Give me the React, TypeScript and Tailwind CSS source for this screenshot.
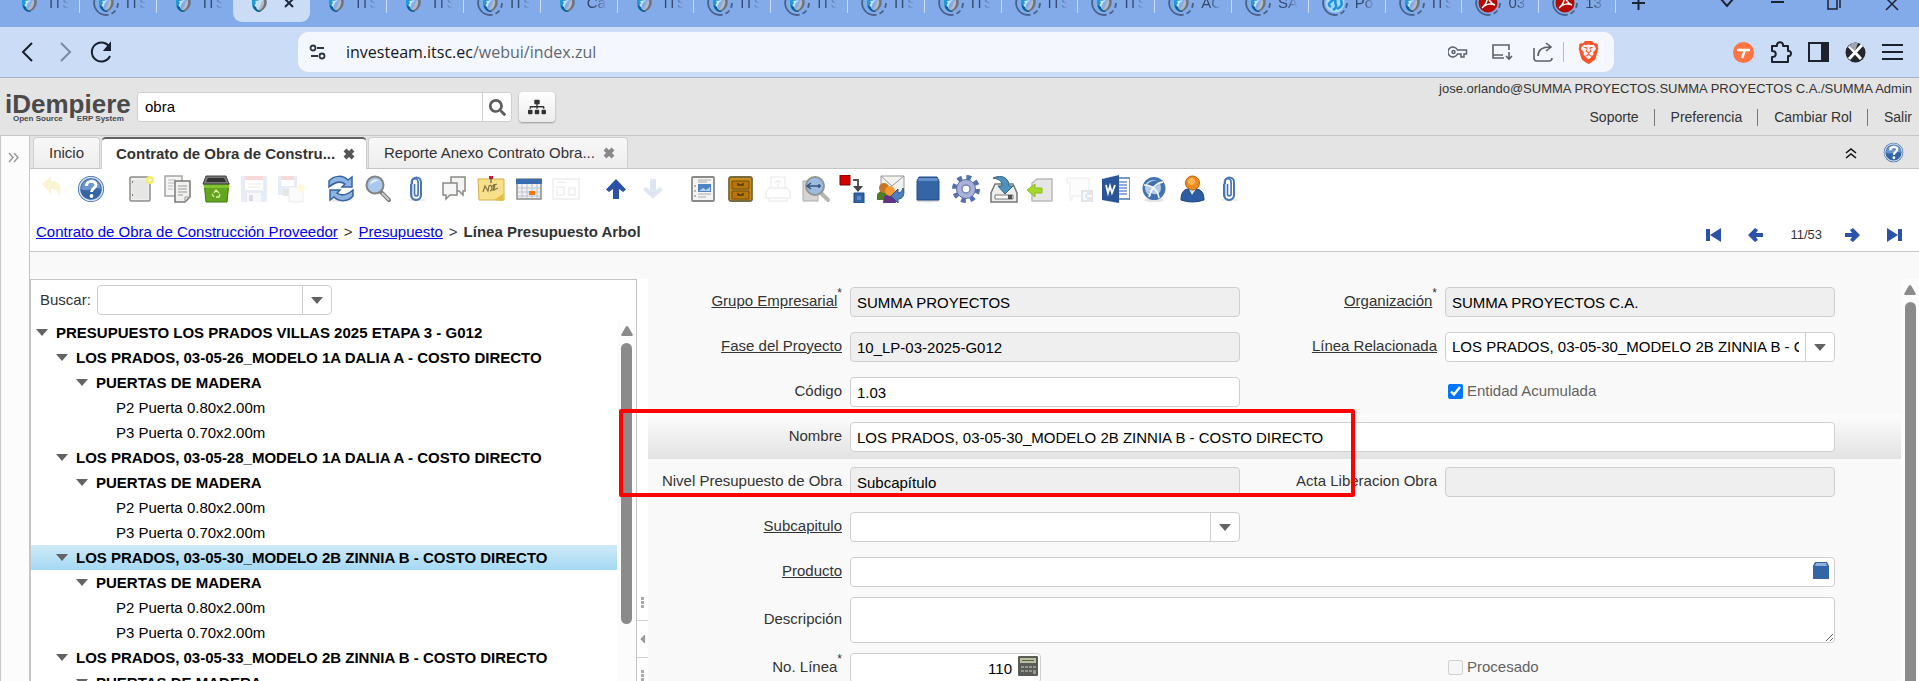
import React from "react";
import { FaSearch, FaSitemap, FaCaretLeft } from "react-icons/fa";
import { SiBrave } from "react-icons/si";

type TabInfo = { text: string; ring?: boolean; kind?: "pdf" | "blue"; active?: boolean };

const browserTabs: TabInfo[] = [
  { text: "ITS" },
  { text: "ITS", ring: true },
  { text: "ITS" },
  { text: "", active: true },
  { text: "ITS" },
  { text: "ITS" },
  { text: "ITS", ring: true },
  { text: "Ca" },
  { text: "ITS" },
  { text: "ITS", ring: true },
  { text: "ITS", ring: true },
  { text: "ITS", ring: true },
  { text: "ITS", ring: true },
  { text: "ITS", ring: true },
  { text: "ITS", ring: true },
  { text: "AC", ring: true },
  { text: "SA", ring: true },
  { text: "Po", ring: true, kind: "blue" },
  { text: "ITS", ring: true },
  { text: "03", ring: true, kind: "pdf" },
  { text: "13", ring: true, kind: "pdf" },
];

const Favicon = ({ ring, kind }: { ring?: boolean; kind?: string }) => (
  <svg width="28" height="28" viewBox="0 0 28 28" fill="none" className="shrink-0">
    {ring && (
      <>
        <path d="M26 14a12 12 0 0 1-12 12" stroke="#46618a" strokeWidth="1.800" strokeDasharray="5 3" />
        <path d="M14 26A12 12 0 0 1 2.500 11" stroke="#46618a" strokeWidth="1.800" />
      </>
    )}
    {kind === "pdf" && (
      <>
        <circle cx="14" cy="14" r="9.500" fill="#b30b00" />
        <path d="M13 7c2 4 4 8 8 9M13 7c1 5-2 10-5 12M9 18c3-3 8-4 12-2" stroke="#fff" strokeWidth="1.500" />
      </>
    )}
    {kind === "blue" && (
      <>
        <circle cx="14" cy="14" r="9.500" fill="#a9d6f5" />
        <path d="M10 18c-5-3 0-5 3-8M12 21c7-4 0-6 3-10M16 20c6-3 5-5 4-9" stroke="#1a93dd" strokeWidth="2.500" />
      </>
    )}
    {!kind && (
      <>
        <path d="M7 6h12l-7 8c-2 4 0 7 3 9-4 0-8-3-8-8 0-4 0-6 0-9z" fill="#1f9ad6" />
        <path d="M20 8c3 4 2 10-2 13-3 2-6 2-7 1 3 0 5-2 6-5 1-3 1-6 3-9z" fill="#6d747e" />
        <path d="M17 12c-1 2-1 4-3 7-1 2-2 2-2 2 5 1 8-5 7-10z" fill="#b3bac5" />
        <path d="m10 12 6-1c-4 3-5 6-4 9-3-1-3-4-1-6z" fill="#cfe0f1" />
        <path d="M8 16c0 4 3 6 6 7 2 0 2-1 2-1-3 0-5-2-5-4z" fill="#0a5c92" />
      </>
    )}
  </svg>
);

const TabStrip = () => (
  <div className="flex h-[27px] items-end overflow-hidden bg-[#84abe9] pb-[5px] pl-[3px]">
    <div className="flex min-w-0 flex-1">
      {browserTabs.map((t, i) => (
        <div
          key={i}
          className={
            t.active
              ? "flex h-[38px] flex-1 items-center overflow-hidden rounded-b-[9px] bg-[#cbdcf6] pl-[12px]"
              : "relative flex h-[38px] flex-1 items-center pl-[12px]"
          }
        >
          <Favicon ring={t.ring} kind={t.kind} />
          {t.active ? (
            <button aria-label="Cerrar" className="ml-[10px]">
              <svg width="12" height="12" viewBox="0 0 12 12" stroke="#1c2a3d" strokeWidth="2">
                <path d="m2 2 8 8M10 2l-8 8" />
              </svg>
            </button>
          ) : (
            <span className="ml-[6px] w-[20px] overflow-hidden text-[15px] leading-[20px] whitespace-nowrap text-[#33496e] [mask-image:linear-gradient(to_right,#000_40%,transparent)]">
              {t.text}
            </span>
          )}
          {!t.active && i !== 2 && (
            <span className="absolute right-0 bottom-[9px] h-[20px] w-px bg-[#c9dbf7]" />
          )}
        </div>
      ))}
    </div>
    <div className="flex h-[38px] w-[303px] items-center pl-[14px]">
      <svg width="289" height="18" viewBox="0 0 289 18" fill="none" stroke="#1b2534" strokeWidth="2">
        <path d="M2 9h13M8.500 2v14M91 5l6 7 6-7M141 8h13" />
        <path d="M198 3h9v12h-9zM210 1v13" strokeWidth="1.500" />
        <path d="m256 4 12 12M268 4l-12 12" strokeWidth="1.500" />
      </svg>
    </div>
  </div>
);

const AddressBar = () => (
  <div className="flex h-[51px] items-center border-b border-[#a3b1c6] bg-[#cbdcf6] pr-[16px] pl-[18px]">
    <div className="flex w-[280px] items-center gap-[12px]">
      <button aria-label="Atrás">
        <svg width="20" height="22" viewBox="0 0 20 22" fill="none" stroke="#16202e" strokeWidth="2">
          <path d="m14 2-9 9 9 9" />
        </svg>
      </button>
      <button aria-label="Adelante" className="ml-[6px]">
        <svg width="20" height="22" viewBox="0 0 20 22" fill="none" stroke="#7b8aa3" strokeWidth="2">
          <path d="m5 2 9 9-9 9" />
        </svg>
      </button>
      <button aria-label="Recargar">
        <svg width="26" height="24" viewBox="0 0 26 24" fill="none" stroke="#16202e" strokeWidth="2">
          <path d="M22 16a9.500 9.500 0 1 1 0-8" />
          <path d="M22 4v6h-5z" fill="#16202e" />
        </svg>
      </button>
    </div>
    <div className="flex h-[40px] flex-1 items-center rounded-[10px] bg-[#f4f7fd] pr-[14px] pl-[11px]">
      <svg width="18" height="16" viewBox="0 0 18 16" fill="none" stroke="#2c3542" strokeWidth="1.800">
        <circle cx="4" cy="4" r="2.500" />
        <path d="M8 4h7M2 12h7" />
        <circle cx="13" cy="12" r="2.500" />
      </svg>
      <span className="ml-[19px] flex-1 font-['Open_Sans',sans-serif] text-[16px] text-[#5f6773]">
        <span className="text-[#14181f]">investeam.itsc.ec</span>/webui/index.zul
      </span>
      <div className="flex items-center">
        <svg width="20" height="14" viewBox="0 0 20 14" fill="none" stroke="#5b626c" strokeWidth="1.500">
          <path d="M9.500 5A5 5 0 1 0 9.500 9H13v3h3V9h2.500V5z" />
          <circle cx="5.500" cy="7" r="1.500" />
        </svg>
        <svg width="22" height="20" viewBox="0 0 22 20" fill="none" stroke="#5b626c" strokeWidth="1.600" className="ml-[23px]">
          <path d="M18 8V3H2v13h11M2 13h10M18 10v7M15 14l3 3 3-3" />
        </svg>
        <svg width="20" height="20" viewBox="0 0 20 20" fill="none" stroke="#5b626c" strokeWidth="1.600" className="ml-[20px]">
          <path d="M1 6v10q0 3 3 3h12q3 0 3-3M5 14c0-6 4-9 12-9M13 1l5 4-5 4" />
        </svg>
        <span className="ml-[10px] h-[20px] w-px bg-[#b5bcc8]" />
        <SiBrave className="ml-[13px] text-[23px] text-[#fb542b]" />
      </div>
    </div>
    <div className="ml-[119px] flex items-center gap-[16px]">
      <svg width="21" height="21" viewBox="0 0 21 21">
        <circle cx="10.500" cy="10.500" r="10.500" fill="#ff7442" />
        <path d="M4 8h13M12 8l-3 8" stroke="#fff" strokeWidth="2.500" fill="none" />
      </svg>
      <svg width="22" height="22" viewBox="0 0 22 22" fill="none" stroke="#1c222c" strokeWidth="2" strokeLinejoin="round">
        <path d="M2 5h5c-1-5 7-5 6 0h5v5c4-1 4 6 0 5v6H2v-5c5 0 5-6 0-6z" />
      </svg>
      <svg width="21" height="20" viewBox="0 0 21 20" fill="none">
        <path d="M1 1h19v18H1z" stroke="#1c222c" strokeWidth="2" />
        <path d="M13 1h7v18h-7z" fill="#1c222c" />
      </svg>
      <svg width="21" height="21" viewBox="0 0 21 21">
        <circle cx="10.500" cy="10.500" r="10" fill="#23262b" />
        <path d="m4 4 12 13M17 3 4 17" stroke="#fff" strokeWidth="3" />
        <path d="m4 4 3-3h6l-3 8z" fill="#9da7b3" />
      </svg>
      <svg width="21" height="18" viewBox="0 0 21 18" stroke="#1c222c" strokeWidth="2">
        <path d="M0 2h21M0 9h21M0 16h21" />
      </svg>
    </div>
  </div>
);

const Header = () => (
  <header className="flex h-[58px] border-b border-[#c5c5c5] bg-[#e4e4e4]">
    <div className="ml-[5px] w-[132px] pt-[15px] font-bold text-[#4a4a4a]">
      <div className="text-[26px] leading-[22px]">iDempiere</div>
      <div className="flex gap-[14px] pl-[8px] text-[8px] leading-[8px]">
        <span>Open Source</span>
        <span>ERP System</span>
      </div>
    </div>
    <div className="mt-[14px] flex h-[30px] w-[375px] rounded-[3px] border border-[#cfcfcf] bg-white">
      <input
        aria-label="Buscar menú"
        defaultValue="obra"
        className="min-w-0 flex-1 px-[7px] text-[15px] text-black outline-none"
      />
      <button aria-label="Buscar" className="flex w-[29px] items-center justify-center border-l border-[#cfcfcf]">
        <FaSearch className="text-[17px] text-[#5c5c5c]" />
      </button>
    </div>
    <button
      aria-label="Menú"
      className="mt-[14px] ml-[7px] flex h-[30px] w-[36px] items-center justify-center rounded-[4px] bg-linear-to-b from-white to-[#ececec] shadow-[0_1px_2px_rgba(0,0,0,0.35)]"
    >
      <FaSitemap className="text-[18px] text-[#333]" />
    </button>
    <div className="ml-auto flex flex-col items-end pt-[3px] pr-[7px] text-[14px] text-[#333]">
      <div className="text-[13px] leading-[16px]">
        jose.orlando@SUMMA PROYECTOS.SUMMA PROYECTOS C.A./SUMMA Admin
      </div>
      <nav className="mt-[12px] flex leading-[17px]">
        <a href="#" className="border-r border-[#777] pr-[15px]">Soporte</a>
        <a href="#" className="border-r border-[#777] pr-[15px] pl-[16px]">Preferencia</a>
        <a href="#" className="border-r border-[#777] pr-[15px] pl-[16px]">Cambiar Rol</a>
        <a href="#" className="pl-[16px]">Salir</a>
      </nav>
    </div>
  </header>
);

const HelpIcon = ({ size }: { size: number }) => (
  <svg width={size} height={size} viewBox="0 0 28 28" fill="none">
    <circle cx="14" cy="14" r="13" fill="#3465a4" />
    <circle cx="14" cy="14" r="11.500" stroke="#d5e1f0" strokeWidth="1.500" />
    <path d="M4 14a10 10 0 0 1 20 0c-6-3-14 4-20 0z" fill="#6c94c8" />
    <path d="M9.500 11c0-6 9.500-6 9.500-1 0 3-4.500 3.500-4.500 7" stroke="#fff" strokeWidth="3" />
    <circle cx="14.500" cy="21" r="1.900" fill="#fff" />
  </svg>
);

const Clip = () => (
  <>
    <ellipse cx="15" cy="25" rx="9" ry="1.500" fill="#eee" />
    <path d="M9 9v11a5 5 0 0 0 10 0V7a4.500 4.500 0 0 0-9 0v2" stroke="#4a77b4" strokeWidth="2" />
    <path d="M12.500 9v10a1.800 1.800 0 0 0 3.600 0V7a3.300 3.300 0 0 0-6.600 0v13a4.600 4.600 0 0 0 9.500 0V8" stroke="#4a77b4" strokeWidth="1.700" />
  </>
);

const icons: Record<string, React.ReactNode> = {
  Deshacer: <path opacity=".3" d="M2 9 11 1v5c9 0 12 6 8 17 0-7-2-9-8-9v5z" fill="#f3d96b" />,
  Nuevo: (
    <>
      <rect x="3" y="2" width="20" height="24" rx="1" fill="#eee" stroke="#8a8d89" strokeWidth="1.500" />
      <path d="M5 5h16v19H5z" fill="#e6e6e4" />
      <path d="M5 7h1M5 20h1" stroke="#777" strokeWidth="2" />
      <circle cx="23" cy="5" r="4" fill="#f7ec6a" />
      <circle cx="23" cy="5" r="1.600" fill="#fffde0" />
    </>
  ),
  Copiar: (
    <>
      <path d="M1 1h17v20H1z" fill="#f5f5f5" stroke="#a3a5a2" strokeWidth="1.500" />
      <path d="M4 5h8M4 8h8M4 11h5M4 14h5" stroke="#bbb" />
      <path d="M11 6h15v16l-5 5H11z" fill="#f0f0ef" stroke="#777a76" strokeWidth="1.500" />
      <path d="M14 11h9M14 14h9M14 17h9M14 20h5M21 27v-5h5" stroke="#999" />
    </>
  ),
  Borrar: (
    <>
      <path d="M2 8h25l-2 19H4z" fill="#63a51c" stroke="#3f7a10" />
      <path d="M4 1h20l3 8H1z" fill="#777" stroke="#444" />
      <path d="M6 3h16l2 4H4z" fill="#333" />
      <path d="M2 10h25v3H2z" fill="#82c52c" />
      <path d="m12 18 2-3 3 3M18 19l-1 3h-3M12 22l-2-3" stroke="#d9f2b0" strokeWidth="1.300" />
    </>
  ),
  Guardar: (
    <g opacity=".18">
      <rect x="1" y="1" width="26" height="26" rx="1" fill="#7d9fd0" />
      <path d="M5 1h18v14H5z" fill="#fff" />
      <path d="M5 1h18v4H5z" fill="#e03030" />
      <path d="M8 9h12M8 12h12" stroke="#999" />
      <path d="M7 18h14v9H7z" fill="#ddd" />
      <path d="M9 20h4v6H9z" fill="#446" />
    </g>
  ),
  "Guardar y nuevo": (
    <g opacity=".18">
      <path d="M1 1h19v19H1z" fill="#7d9fd0" />
      <path d="M4 1h13v10H4z" fill="#fff" />
      <path d="M4 1h13v4H4z" fill="#e03030" />
      <path d="M6 14h10v7H6z" fill="#777" />
      <path d="M12 12h14v15H12z" fill="#eee" stroke="#999" />
      <circle cx="24" cy="13" r="4" fill="#f3e24a" />
    </g>
  ),
  Refrescar: (
    <>
      <ellipse cx="14" cy="25" rx="12" ry="2" fill="#ececec" />
      <path d="M2 12V6c5-6 14-6 19-1l4-3v10H15l3-3C14 6 8 7 2 12z" fill="#8db3de" stroke="#3465a4" strokeWidth="1.500" />
      <path d="M26 15v6c-5 6-14 6-19 1l-4 3V15h10l-3 3c4 3 10 2 16-3z" fill="#8db3de" stroke="#3465a4" strokeWidth="1.500" />
    </>
  ),
  Buscar: (
    <>
      <path d="m17 17 8 8" stroke="#777" strokeWidth="4" strokeLinecap="round" />
      <path d="m18 18 7 7" stroke="#ccc" strokeWidth="2" />
      <circle cx="11" cy="10" r="8.500" fill="#a9c8ee" stroke="#82857f" strokeWidth="2" />
      <path d="M6 10c0-5 6-7 9-4-3 0-7 2-9 4z" fill="#e0edfb" />
    </>
  ),
  Adjunto: <Clip />,
  Chat: (
    <>
      <path d="M11 2h14v14h-2v4l-4-4h-8z" fill="#f4f4f4" stroke="#888a85" strokeWidth="1.500" />
      <path d="M3 8h14v12h-7l-4 4v-4H3z" fill="#f6f6f6" stroke="#888a85" strokeWidth="1.500" />
    </>
  ),
  Nota: (
    <>
      <path d="M1 4h26v21H2z" fill="#f7e089" stroke="#d2b047" />
      <path d="m17 25 9-6v7z" fill="#e3bb45" />
      <path d="m6 17 2-6 3 5 1-5c3-3 4 5 1 5m3 0 1-7m-2 2 5-2m-2 0-1 6 4-2" stroke="#817447" strokeWidth="1.200" />
      <path d="M12 1h4v3h-4z" fill="#c02038" />
      <path d="M14 4v4" stroke="#777" strokeWidth="1.500" />
    </>
  ),
  Calendario: (
    <>
      <rect x="2" y="4" width="24" height="20" fill="#f1f1f1" stroke="#8a8d89" strokeWidth="1.500" />
      <path d="M1 4h26v5H1z" fill="#3a6cb0" />
      <path d="M3 13h22M3 17h22M3 21h22M7 9v14M12 9v14M17 9v14M22 9v14" stroke="#b9c3cf" />
      <path d="M14 16h6v4h-6z" fill="#f57900" />
    </>
  ),
  Detalle: (
    <g opacity=".14" stroke="#888" strokeWidth="1.500">
      <rect x="1" y="4" width="26" height="20" />
      <path d="M5 7h8M5 12h7v8H5zM17 13h6v7h-6z" />
    </g>
  ),
  Padre: <path d="M14 4 24 14.500 21 17l-4-3v10h-6V14l-4 3-3-2.500z" fill="#2b52a8" />,
  Hijo: <path opacity=".15" d="M14 24 24 14.500 21 12l-4 3V4h-6v11l-4-3-3 2.500z" fill="#2b52a8" />,
  Informe: (
    <>
      <rect x="3" y="2" width="22" height="24" rx="1" fill="#f4f4f4" stroke="#888a85" strokeWidth="1.800" />
      <path d="M9 5h13M9 7h9M9 19h13M9 22h8" stroke="#aaa" />
      <path d="M9 9h13v8H9z" fill="#4d84c4" />
      <path d="m10 16 4-3 3 2 4-3v4z" fill="#b8d3e8" />
      <path d="M5 11h2M5 16h2M5 21h2" stroke="#777" />
    </>
  ),
  Archivo: (
    <>
      <rect x="3" y="2" width="23" height="24" rx="2" fill="#c98a1b" stroke="#776a3c" strokeWidth="1.800" />
      <path d="M6 6h17v8H6zM6 16h17v8H6z" fill="#b87508" stroke="#6f5010" />
      <path d="M12 8v2h5V8M12 18v2h5v-2" stroke="#4d3a10" strokeWidth="1.500" />
    </>
  ),
  Imprimir: (
    <g opacity=".16" stroke="#999" strokeWidth="1.500">
      <path d="M7 13V2h14v11M5 13h18l3 4v6H2v-6zM5 23h18v3H5zM14 5v7M11 8l3-3 3 3" />
    </g>
  ),
  Zoom: (
    <>
      <path d="M1 6h15v20H1z" fill="#d5d5d5" stroke="#aaa" />
      <path d="m19 18 7 7" stroke="#b4b6b2" strokeWidth="4" strokeLinecap="round" />
      <circle cx="13" cy="11" r="9" fill="#9dbbe0" stroke="#92958f" strokeWidth="2" />
      <path d="M6 11h13M9 8l-4 3 4 3M17 9v4" stroke="#31577f" strokeWidth="1.500" />
    </>
  ),
  "Flujo de trabajo": (
    <>
      <path d="M1 0h10v10H1z" fill="#d40000" stroke="#7a0000" />
      <path d="M14 5h5v8" stroke="#555" strokeWidth="2" />
      <path d="M14 11h10l-5 6z" fill="#444" />
      <path d="M15 18h10v10H15z" fill="#3465a4" stroke="#1e4682" />
      <path d="M18 21h4v4h-4z" fill="#5c8ac4" />
    </>
  ),
  Solicitud: (
    <>
      <path d="M4 1h23v17H4z" fill="#f1f1ef" stroke="#999" />
      <path d="m4 1 11 10L27 1" stroke="#999" />
      <path d="M0 19q5-6 10 0v6H0z" fill="#4e7d27" />
      <circle cx="7" cy="13" r="5" fill="#c87524" />
      <path d="M6 28q0-10 7-8 6-2 6 8z" fill="#653184" />
      <circle cx="13" cy="16" r="5" fill="#f39a36" />
      <path d="M14 21 21 14v4c3 0 4-2 5-5 2 7 0 11-5 11v4z" fill="#4f80bd" stroke="#2c5796" />
    </>
  ),
  Producto: (
    <>
      <ellipse cx="14" cy="26" rx="12" ry="1.500" fill="#ddd" />
      <path d="m5 2-2 4v19h22V6l-2-4z" fill="#3465a4" stroke="#204a87" />
      <path d="m5 3-1 3h20l-1-3z" fill="#6490ca" />
    </>
  ),
  Proceso: (
    <>
      <circle cx="14" cy="14" r="11.500" stroke="#5670a8" strokeWidth="5" strokeDasharray="4.700 4.330" />
      <circle cx="14" cy="14" r="9.500" fill="#aab0d6" stroke="#5670a8" />
      <circle cx="14" cy="14" r="4" fill="#fff" stroke="#7683b5" strokeWidth="1.500" />
    </>
  ),
  Exportar: (
    <>
      <path d="m5 9-4 9v9h26v-9l-4-9z" fill="#eee" stroke="#777" strokeWidth="1.500" />
      <path d="M5 20h18v4H5z" fill="#fff" stroke="#777" />
      <path d="M19 20v4M21 20v4" stroke="#222" strokeWidth="1.500" />
      <path d="M3 3c9-4 16 0 16 8h4l-8 8-7-8h4C12 6 9 4 3 3z" fill="#4f91bd" stroke="#316585" />
    </>
  ),
  Importar: (
    <>
      <path d="M5 8 10 4h15v22H5z" fill="#e6e6e4" stroke="#bbb" strokeWidth="1.500" />
      <path d="M0 15 8 9v4h7v5H8v4z" fill="#a4d82c" stroke="#8abf1c" />
    </>
  ),
  Script: (
    <g opacity=".16">
      <path d="M2 3h22v18H7v4H5V8H2z" fill="#eee" stroke="#888" />
      <rect x="16" y="15" width="12" height="12" fill="#4b6c8c" />
      <path d="M22 18h-3v6h3M27 21h-5" stroke="#fff" strokeWidth="1.500" />
    </g>
  ),
  Word: (
    <>
      <path d="M14 3h14v21H14z" fill="#fff" stroke="#4c77b8" strokeWidth="1.500" />
      <path d="M17 7h8M17 10h8M17 13h8M17 16h8M17 19h8" stroke="#6c92ca" strokeWidth="1.500" />
      <path d="M0 4 17 0v28L0 25z" fill="#2a5699" />
      <path d="m4 10 2 8 2-7 2 7 3-8" stroke="#fff" strokeWidth="1.800" />
    </>
  ),
  Web: (
    <>
      <ellipse cx="14" cy="25" rx="10" ry="2" fill="#e3e3e3" />
      <circle cx="14" cy="13.500" r="11.500" fill="#4474b2" />
      <circle cx="13" cy="13" r="8" fill="#b7cde6" />
      <path d="M7 10c4-5 9-5 12-3 0 5-6 6-12 3z" fill="#3f6fae" />
      <path d="M8 16c4 4 9 4 13 1-2 6-9 8-13-1z" fill="#3f6fae" />
      <path d="M4 10c8 0 14 5 15 13M23 7c-7 1-12 7-14 15" stroke="#fff" strokeWidth="1.600" />
    </>
  ),
  Usuario: (
    <>
      <path d="M3 25c0-9 4-11 8-11h7c5 0 8 4 8 11q-12 4-23 0z" fill="#2c5da3" stroke="#1d4278" />
      <path d="m11 14 3 6 4-6z" fill="#dbe8f8" />
      <circle cx="14.500" cy="8" r="7" fill="#f08a1c" stroke="#b8620a" />
      <circle cx="13.500" cy="6.500" r="3.500" fill="#fbb35c" />
    </>
  ),
  Anexos: <Clip />,
};

const ToolGroup = ({ names, width }: { names: string[]; width: string }) => (
  <div className={"flex " + width}>
    {names.map((n) => (
      <button key={n} aria-label={n} className="flex flex-1 justify-center">
        {n === "Ayuda" ? (
          <HelpIcon size={28} />
        ) : (
          <svg width="28" height="28" viewBox="0 0 28 28" fill="none">
            {icons[n]}
          </svg>
        )}
      </button>
    ))}
  </div>
);

const Toolbar = () => (
  <div className="flex gap-[12px] pt-[6px] pl-[5px]">
    <ToolGroup width="w-[75px]" names={["Deshacer", "Ayuda"]} />
    <ToolGroup width="w-[188px]" names={["Nuevo", "Copiar", "Borrar", "Guardar", "Guardar y nuevo"]} />
    <ToolGroup
      width="w-[263px]"
      names={["Refrescar", "Buscar", "Adjunto", "Chat", "Nota", "Calendario", "Detalle"]}
    />
    <ToolGroup width="w-[75px]" names={["Padre", "Hijo"]} />
    <ToolGroup
      width="w-[564px]"
      names={[
        "Informe", "Archivo", "Imprimir", "Zoom", "Flujo de trabajo", "Solicitud", "Producto", "Proceso",
        "Exportar", "Importar", "Script", "Word", "Web", "Usuario", "Anexos",
      ]}
    />
  </div>
);

const navPaths = {
  Primero: "M0 2h4v12H0zM15 1v14L4 8z",
  Anterior: "M0 8 7 1l3 2-2 3h7v4H8l2 3-3 2z",
  Siguiente: "M16 8 9 1 6 3l2 3H1v4h7l-2 3 3 2z",
  Último: "M16 2h-4v12h4zM1 1v14l11-7z",
};

const NavButton = ({ name }: { name: keyof typeof navPaths }) => (
  <button aria-label={name}>
    <svg width="16" height="16" viewBox="0 0 16 16" fill="#2b52a8">
      <path d={navPaths[name]} />
    </svg>
  </button>
);

const Breadcrumb = () => (
  <div className="flex h-[46px] items-center border-b border-[#c5c5c5] pt-[8px] pr-[17px] pl-[6px] text-[15px] text-[#333]">
    <a href="#" className="text-[#0000ee] underline">Contrato de Obra de Construcción Proveedor</a>
    <span className="px-[6px]">&gt;</span>
    <a href="#" className="text-[#0000ee] underline">Presupuesto</a>
    <span className="px-[6px]">&gt;</span>
    <b>Línea Presupuesto Arbol</b>
    <div className="ml-auto flex items-center gap-[26px] pt-[4px]">
      <NavButton name="Primero" />
      <NavButton name="Anterior" />
      <span className="-mr-[4px] text-[13px]">11/53</span>
      <NavButton name="Siguiente" />
      <NavButton name="Último" />
    </div>
  </div>
);

const CloseTab = ({ color }: { color: string }) => (
  <button aria-label="Cerrar pestaña">
    <svg width="12" height="12" viewBox="0 0 12 12" stroke={color} strokeWidth="4">
      <path d="m2 2 8 8M10 2l-8 8" />
    </svg>
  </button>
);

const AppTabs = () => (
  <div className="flex h-[33px] items-end border-b border-[#c5c5c5] bg-[#e4e4e4] pl-[3px] text-[15px] text-[#333]">
    <button className="h-[31px] w-[67px] rounded-t-[4px] border border-b-0 border-[#cfcfcf] bg-linear-to-b from-[#f8f8f8] to-[#ededed]">
      Inicio
    </button>
    <div className="ml-px -mb-px flex h-[32px] w-[266px] items-center justify-between rounded-t-[5px] border-x border-t-2 border-x-[#cfcfcf] border-t-[#606060] bg-white pr-[11px] pl-[14px]">
      <b>Contrato de Obra de Constru...</b>
      <CloseTab color="#555" />
    </div>
    <div className="ml-px flex h-[31px] w-[260px] items-center justify-between rounded-t-[4px] border border-b-0 border-[#cfcfcf] bg-linear-to-b from-[#f8f8f8] to-[#ededed] pr-[12px] pl-[15px]">
      <span>Reporte Anexo Contrato Obra...</span>
      <CloseTab color="#888" />
    </div>
    <div className="mb-[5px] ml-auto flex items-center gap-[26px] pr-[15px]">
      <button aria-label="Contraer">
        <svg width="12" height="12" viewBox="0 0 12 12" fill="none" stroke="#111" strokeWidth="1.600">
          <path d="m1 6 5-4 5 4M1 11l5-4 5 4" />
        </svg>
      </button>
      <button aria-label="Ayuda de ventana">
        <HelpIcon size={21} />
      </button>
    </div>
  </div>
);

const tree: [number, string][] = [
  [0, "PRESUPUESTO LOS PRADOS VILLAS 2025 ETAPA 3 - G012"],
  [1, "LOS PRADOS, 03-05-26_MODELO 1A DALIA A - COSTO DIRECTO"],
  [2, "PUERTAS DE MADERA"],
  [3, "P2 Puerta 0.80x2.00m"],
  [3, "P3 Puerta 0.70x2.00m"],
  [1, "LOS PRADOS, 03-05-28_MODELO 1A DALIA A - COSTO DIRECTO"],
  [2, "PUERTAS DE MADERA"],
  [3, "P2 Puerta 0.80x2.00m"],
  [3, "P3 Puerta 0.70x2.00m"],
  [1, "LOS PRADOS, 03-05-30_MODELO 2B ZINNIA B - COSTO DIRECTO"],
  [2, "PUERTAS DE MADERA"],
  [3, "P2 Puerta 0.80x2.00m"],
  [3, "P3 Puerta 0.70x2.00m"],
  [1, "LOS PRADOS, 03-05-33_MODELO 2B ZINNIA B - COSTO DIRECTO"],
  [2, "PUERTAS DE MADERA"],
];

const indent = ["pl-[5px]", "pl-[25px]", "pl-[45px]", "pl-[65px]"];

const Caret = () => (
  <svg width="12" height="7" viewBox="0 0 12 7" fill="#636363" className="shrink-0">
    <path d="M0 0h12L6 7z" />
  </svg>
);

const Combo = ({ id, value = "", label }: { id: string; value?: string; label?: string }) => (
  <div className="relative h-[30px] w-full">
    <select
      id={id}
      aria-label={label}
      className="h-full w-full appearance-none rounded-[4px] border border-[#cfcfcf] bg-white pr-[35px] pl-[6px] text-[15px] text-black"
    >
      <option>{value}</option>
    </select>
    <span className="pointer-events-none absolute inset-y-px right-px flex w-[29px] items-center justify-center border-l border-[#cfcfcf]">
      <Caret />
    </span>
  </div>
);

const ScrollArrow = () => (
  <svg width="12" height="10" viewBox="0 0 12 10" fill="#8b8b8b">
    <path d="M6 0q1 0 2 2l4 7-1 1H1L0 9l4-7q1-2 2-2z" />
  </svg>
);

const TreePanel = () => (
  <aside className="flex w-[607px] shrink-0 flex-col border border-b-0 border-[#c5c5c5] bg-white">
    <div className="flex items-center py-[5px] pl-[9px] text-[15px] text-[#333]">
      <label htmlFor="buscar" className="w-[57px]">Buscar:</label>
      <div className="w-[235px]">
        <Combo id="buscar" />
      </div>
    </div>
    <div className="flex min-h-0 flex-1">
      <ul className="min-w-0 flex-1 text-[15px] leading-[25px] text-black">
        {tree.map(([level, text], i) => (
          <li
            key={i}
            className={
              "flex items-center gap-[8px] whitespace-nowrap " +
              indent[level] +
              (i === 9 ? " bg-linear-to-b from-[#cfeaf8] to-[#a4d8f3]" : "")
            }
          >
            {level < 3 ? <Caret /> : <span className="w-[12px]" />}
            <span className={level < 3 ? "font-bold" : ""}>{text}</span>
          </li>
        ))}
      </ul>
      <div className="flex w-[19px] flex-col items-center bg-[#fcfcfc] pt-[6px]">
        <ScrollArrow />
        <div className="mt-[7px] h-[281px] w-[11px] rounded-full bg-[#8b8b8b]" />
      </div>
    </div>
  </aside>
);

const Dots = () => (
  <div className="flex flex-col gap-px">
    <span className="size-[3px] bg-[#aaa]" />
    <span className="size-[3px] bg-[#aaa]" />
    <span className="size-[3px] bg-[#aaa]" />
  </div>
);

const Splitter = () => (
  <div className="flex w-[11px] shrink-0 flex-col items-center bg-white pt-[318px]">
    <Dots />
    <button
      aria-label="Contraer panel"
      className="my-[12px] flex h-[38px] w-full shrink-0 items-center justify-center border-y border-[#cfcfcf]"
    >
      <FaCaretLeft className="text-[14px] text-[#999]" />
    </button>
    <Dots />
  </div>
);

const rowGrid = "grid grid-cols-[202fr_390fr_205fr_390fr_66fr] pt-[8px] text-[15px] text-[#333] ";
const inputCls = "h-[30px] w-full rounded-[4px] border border-[#cfcfcf] px-[6px] text-[15px] text-black ";

const Label = ({ id, text, link, req }: { id: string; text: string; link?: boolean; req?: boolean }) => (
  <label htmlFor={id} className="flex h-[28px] items-center justify-end pr-[8px] whitespace-nowrap">
    <span className={link ? "underline" : ""}>{text}</span>
    {req && <span className="self-start text-[12px] leading-[12px]">*</span>}
  </label>
);

const Text = ({ id, value = "", ro }: { id: string; value?: string; ro?: boolean }) => (
  <input id={id} defaultValue={value} readOnly={ro} className={inputCls + (ro ? "bg-[#efefef]" : "bg-white")} />
);

const Form = () => (
  <form className="min-w-0 flex-1">
    <div className={rowGrid + "h-[45px]"}>
      <Label id="grupo" text="Grupo Empresarial" link req />
      <Text id="grupo" value="SUMMA PROYECTOS" ro />
      <Label id="org" text="Organización" link req />
      <Text id="org" value="SUMMA PROYECTOS C.A." ro />
    </div>
    <div className={rowGrid + "h-[45px]"}>
      <Label id="fase" text="Fase del Proyecto" link />
      <Text id="fase" value="10_LP-03-2025-G012" ro />
      <Label id="relacionada" text="Línea Relacionada" link />
      <Combo id="relacionada" value="LOS PRADOS, 03-05-30_MODELO 2B ZINNIA B - COSTO DIRECTO" />
    </div>
    <div className={rowGrid + "h-[45px]"}>
      <Label id="codigo" text="Código" />
      <Text id="codigo" value="1.03" />
      <span />
      <label className="flex h-[28px] items-center gap-[4px] pl-[3px] text-[#636363]">
        <input type="checkbox" defaultChecked className="size-[15px] accent-[#0075ff]" />
        Entidad Acumulada
      </label>
    </div>
    <div className={rowGrid + "h-[45px] bg-linear-to-b from-[#fdfdfd] to-[#e2e2e2]"}>
      <Label id="nombre" text="Nombre" />
      <div className="col-span-3">
        <Text id="nombre" value="LOS PRADOS, 03-05-30_MODELO 2B ZINNIA B - COSTO DIRECTO" />
      </div>
    </div>
    <div className={rowGrid + "h-[45px]"}>
      <Label id="nivel" text="Nivel Presupuesto de Obra" />
      <Text id="nivel" value="Subcapítulo" ro />
      <Label id="acta" text="Acta Liberacion Obra" />
      <Text id="acta" ro />
    </div>
    <div className={rowGrid + "h-[45px]"}>
      <Label id="subcapitulo" text="Subcapitulo" link />
      <Combo id="subcapitulo" />
    </div>
    <div className={rowGrid + "h-[45px]"}>
      <Label id="producto" text="Producto" link />
      <div className="relative col-span-3">
        <Text id="producto" />
        <button type="button" aria-label="Buscar producto" className="absolute top-[5px] right-[6px]">
          <svg width="16" height="18" viewBox="0 0 16 18">
            <path d="M2 0h12l2 4v13H0V4z" fill="#3465a4" />
            <path d="M3 1h10l1 3H2z" fill="#8eb0dc" />
          </svg>
        </button>
      </div>
    </div>
    <div className={rowGrid + "h-[51px] items-center !pt-0"}>
      <Label id="descripcion" text="Descripción" />
      <textarea
        id="descripcion"
        className="col-span-3 block h-[46px] w-full rounded-[4px] border border-[#cfcfcf] bg-white px-[6px]"
      />
    </div>
    <div className={rowGrid + "h-[45px]"}>
      <Label id="linea" text="No. Línea" req />
      <div className="relative w-[191px]">
        <input id="linea" defaultValue="110" className={inputCls + "bg-white !pr-[28px] text-right"} />
        <button type="button" aria-label="Calculadora" className="absolute top-[3px] right-[3px]">
          <svg width="20" height="20" viewBox="0 0 20 20">
            <rect width="20" height="20" rx="1" fill="#5a5c57" />
            <path d="M2 2h16v5H2z" fill="#b9c0a0" />
            <path d="M4 4h12v1H4z" fill="#5d6550" />
            <path d="M3 10h3v2H3zM7 10h3v2H7zM11 10h3v2h-3zM15 10h3v2h-3zM3 14h3v2H3zM7 14h3v2H7zM11 14h3v2h-3zM15 14h3v4h-3z" fill="#96988f" />
          </svg>
        </button>
      </div>
      <span />
      <label className="flex h-[28px] items-center gap-[4px] pl-[3px] text-[#636363]">
        <input type="checkbox" disabled className="size-[15px]" />
        Procesado
      </label>
    </div>
  </form>
);

const App = () => {
  return (
    <div className="flex h-screen flex-col overflow-hidden bg-white font-['Liberation_Sans',Arial,sans-serif]">
      <TabStrip />
      <AddressBar />
      <Header />
      <div className="flex min-h-0 flex-1">
        <div className="w-[30px] shrink-0 border-x border-[#c5c5c5] bg-[#fcfcfc] pt-[10px] pr-[3px] text-center">
          <button aria-label="Expandir menú">
            <svg width="11" height="11" viewBox="0 0 11 11" fill="none" stroke="#999" strokeWidth="1.500">
              <path d="m1 1 4 4.500L1 10M6 1l4 4.500L6 10" />
            </svg>
          </button>
        </div>
        <main className="flex min-w-0 flex-1 flex-col">
          <AppTabs />
          <div className="h-[37px]">
            <Toolbar />
          </div>
          <Breadcrumb />
          <div className="relative flex min-h-0 flex-1 bg-[#f9f9f9] pt-[27px]">
            <TreePanel />
            <Splitter />
            <Form />
            <div className="flex w-[18px] shrink-0 flex-col items-center bg-[#fcfcfc] pt-[6px]">
              <ScrollArrow />
              <div className="mt-[7px] w-[11px] flex-1 rounded-t-full bg-[#8b8b8b]" />
            </div>
            {/* highlight over Nombre / Nivel */}
            <div className="pointer-events-none absolute top-[157px] left-[589px] h-[88px] w-[736px] rounded-[2px] border-4 border-[#ff0000]" />
          </div>
        </main>
      </div>
    </div>
  );
};

export default App;
